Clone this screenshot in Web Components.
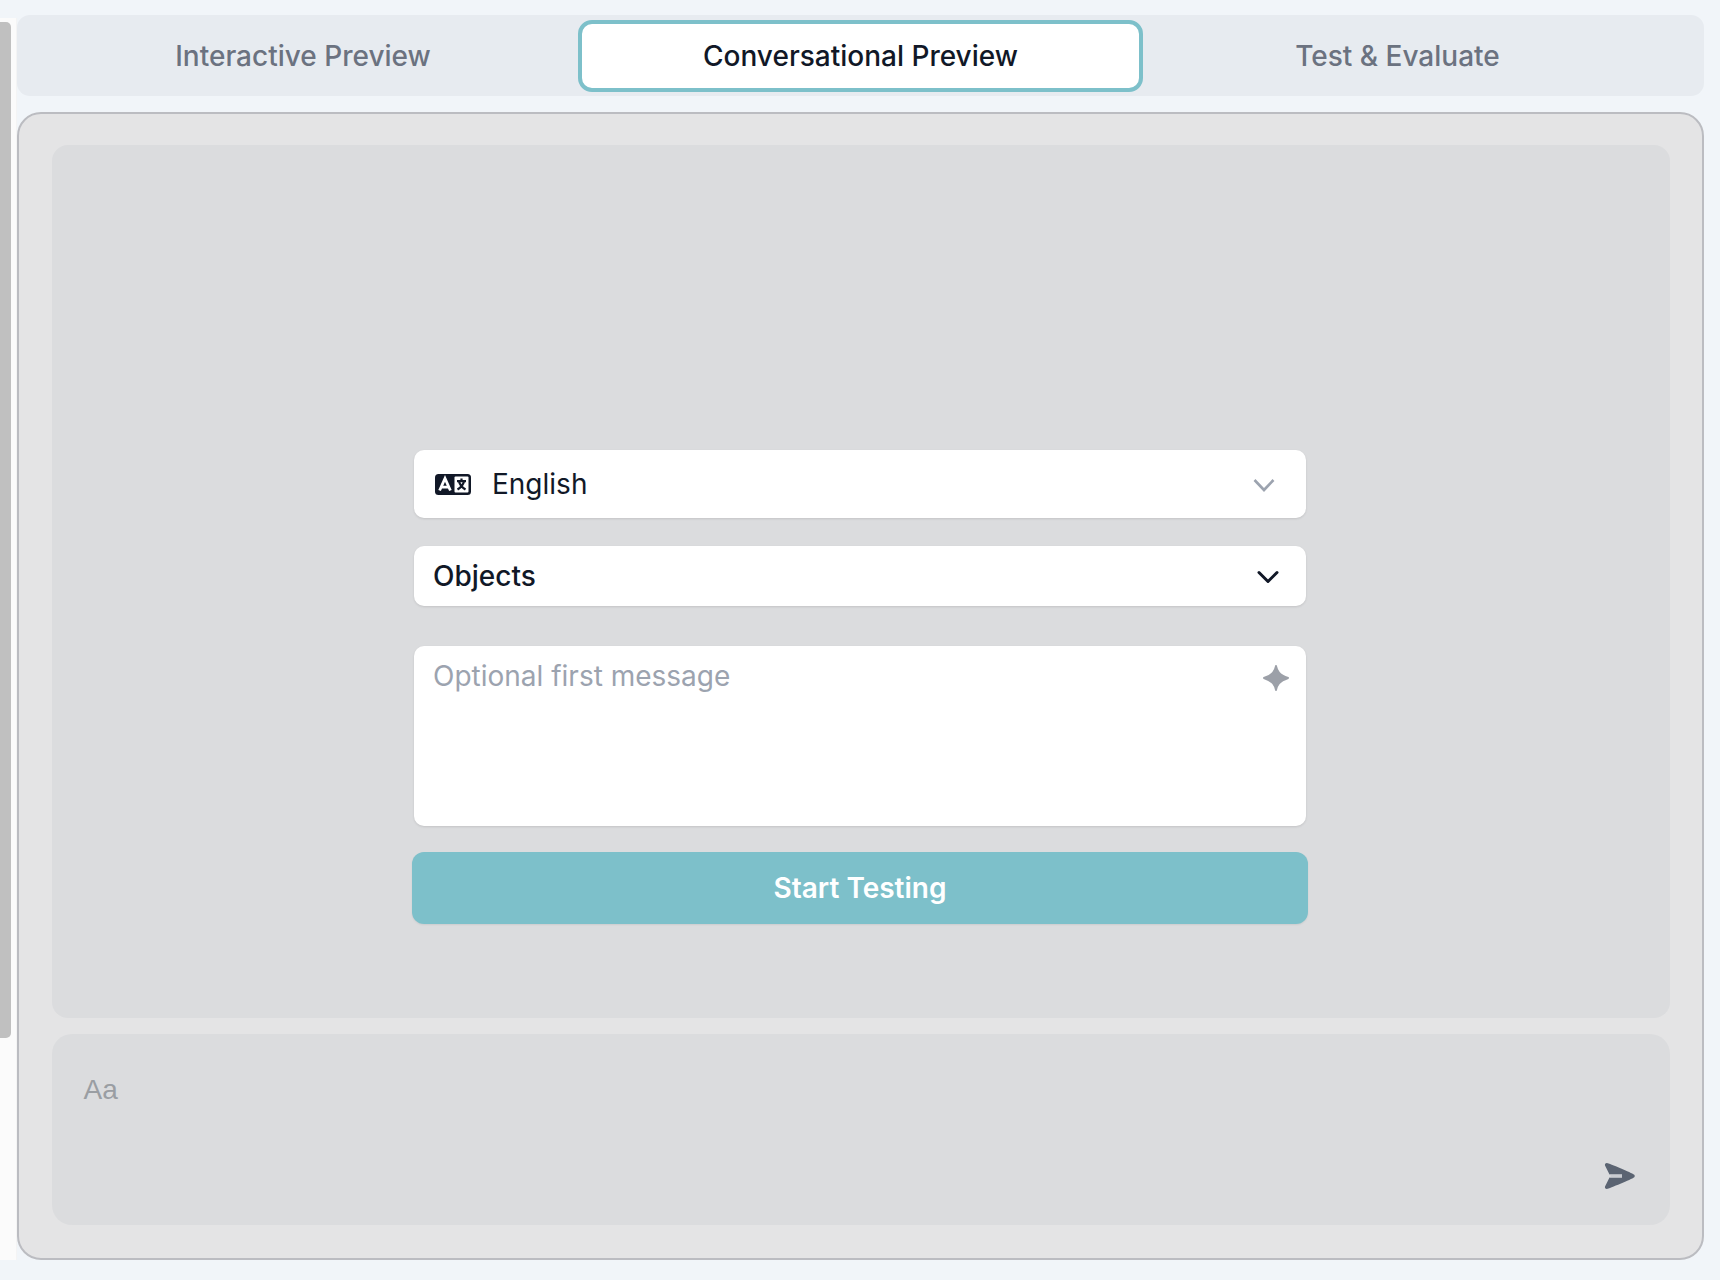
<!DOCTYPE html>
<html><head><meta charset="utf-8">
<style>
html,body{margin:0;padding:0;background:#f1f5f9;height:1280px;overflow:hidden}
body{font-family:Inter,"Liberation Sans",sans-serif}
</style></head><body>
<preview-app>
  <preview-tabs slot="tabs">
    <tab-button first>Interactive Preview</tab-button>
    <tab-button active>Conversational Preview</tab-button>
    <tab-button last>Test &amp; Evaluate</tab-button>
  </preview-tabs>
  <preview-panel slot="panel">
    <setup-form slot="stage">
      <language-select>English</language-select>
      <object-select>Objects</object-select>
      <message-box placeholder="Optional first message"></message-box>
      <start-button>Start Testing</start-button>
    </setup-form>
    <chat-input slot="input" placeholder="Aa"></chat-input>
  </preview-panel>
</preview-app>
<script>
function def(name,html,init){
  customElements.define(name,class extends HTMLElement{
    constructor(){super();this.attachShadow({mode:'open'}).innerHTML=html;}
    connectedCallback(){if(init)init.call(this)}
  });
}
def('preview-app',`<style>
:host{display:grid;grid-template-columns:17px 1fr;height:1280px;box-sizing:border-box;padding:0 16px 20px 0}
.rail{margin-top:18px;background:#fbfbfb;padding-top:4px;box-sizing:border-box;border-right:1px solid #f4f4f4}
.thumb{width:11px;height:1016px;background:#c0c0c0;border-radius:0 5px 5px 0}
.main{display:flex;flex-direction:column;gap:16px;padding-top:15px;min-width:0}
</style><div class="rail"><div class="thumb"></div></div>
<div class="main"><slot name="tabs"></slot><slot name="panel"></slot></div>`);
def('preview-tabs',`<style>
:host{display:grid;grid-template-columns:1fr 565px 1fr;align-items:center;height:81px;box-sizing:border-box;padding:4px;background:#e7ebf0;border-radius:13px;flex:none}
</style><slot></slot>`);
def('tab-button',`<style>
:host{display:flex;align-items:center;justify-content:center;height:72px;margin-top:1px;box-sizing:border-box;font-size:28px;font-weight:500;color:#6b7280;border:4px solid transparent;border-radius:14px}
:host([first]){padding-left:7px}
:host([last]){padding-right:48px}
:host([active]){background:#fff;color:#111827;border-color:#7dc0ca}
</style><slot></slot>`);
def('preview-panel',`<style>
:host{flex:1;display:flex;flex-direction:column;gap:16px;box-sizing:border-box;min-height:0;background:#e4e4e5;border:2px solid #bbbcc1;border-radius:24px;padding:31px 32px 33px 32.5px}
.stage{flex:1;background:#dbdcde;border-radius:16px;display:flex;flex-direction:column;align-items:center;justify-content:flex-end;padding-bottom:94px;box-sizing:border-box;min-height:0}
.input{flex:none;height:191px}
</style><div class="stage"><slot name="stage"></slot></div><div class="input"><slot name="input"></slot></div>`);
def('setup-form',`<style>
:host{display:flex;flex-direction:column;width:896px;margin-right:1.5px}
</style><slot></slot>`);
const field=`box-sizing:border-box;background:#fff;border-radius:10px;box-shadow:0 1px 3px rgba(0,0,0,.07),0 1px 2px rgba(0,0,0,.04);margin:0 2px;color:#111827;`;
def('language-select',`<style>
:host{${field}display:flex;align-items:center;height:68px;padding:0 30px 0 21px;font-size:28px}
.t{flex:1;margin-left:21px}
.c{margin-top:2px}
</style><svg width="36" height="21" viewBox="0 0 36 21"><rect width="36" height="21" rx="3.500" fill="#111827"/><rect x="19.500" y="2.500" width="14" height="16" rx="1" fill="#fff"/><path d="M4.600 16.500 10 4.500l5.400 12M6.800 13.200h6.400" fill="none" stroke="#fff" stroke-width="2.800"/><path d="M22 7.200h9M26.500 4.500v2.500M24 7.500c.9 3.500 3 6 6.500 8M29 7.500c-.9 3.500-3 6-6.500 8" fill="none" stroke="#111827" stroke-width="2.200"/></svg><span class="t"><slot></slot></span>
<svg class="c" width="24" height="16" viewBox="0 0 24 16"><path d="M2.500 3 12 13 21.500 3" fill="none" stroke="#9ca3af" stroke-width="2.600"/></svg>`);
def('object-select',`<style>
:host{${field}display:flex;align-items:center;justify-content:space-between;height:60px;margin-top:28px;padding:0 26px 0 19px;font-size:28px;font-weight:500}
svg{margin-top:1px}
</style><span><slot></slot></span><svg width="24" height="16" viewBox="0 0 24 16"><path d="M3 3.500 12 12.500 21 3.500" fill="none" stroke="#111827" stroke-width="3" stroke-linecap="round" stroke-linejoin="round"/></svg>`);
def('message-box',`<style>
:host{${field}display:flex;justify-content:space-between;align-items:flex-start;height:180px;margin-top:40px;padding:13px 17px 0 19px;font-size:28px;color:#9ca3af}
svg{margin-top:6px}
</style><span class="p"></span><svg width="26" height="26" viewBox="0 0 28 28"><path d="M14 1C15.200 6.500 17 10.500 27 14 17 17.500 15.200 21.500 14 27 12.800 21.500 11 17.500 1 14 11 10.500 12.800 6.500 14 1Z" fill="#9ca0a8" stroke="#9ca0a8" stroke-width="2" stroke-linejoin="round"/></svg>`,function(){this.shadowRoot.querySelector('.p').textContent=this.getAttribute('placeholder')});
def('start-button',`<style>
:host{display:flex;align-items:center;justify-content:center;height:72px;margin-top:26px;background:#7dc0ca;border-radius:12px;color:#fff;font-size:28px;font-weight:600;box-shadow:0 1px 2px rgba(0,0,0,.07)}
</style><slot></slot>`);
def('chat-input',`<style>
:host{display:block;position:relative;height:100%;box-sizing:border-box;background:#dbdcde;border-radius:20px;padding:40px 32px;font-family:"Liberation Sans",sans-serif;font-size:28px;color:#9a9ea3}
svg{position:absolute;right:35px;bottom:35px}
</style><span class="p"></span><svg width="31" height="28" viewBox="0 0 31 28"><path d="M3 1C1.500 .9.600 2.200 1 3.500L5.500 12.600H18V15.400H5.500L1 24.500C.6 25.800 1.500 27.100 3 27 5 26.700 28 17 30 15.500 31 14.700 31 13.300 30 12.500 28 11 5 1.300 3 1Z" fill="#5b6472"/><path d="M5.500 12.600H18V15.400H5.500L7 14Z" fill="#c9ccd1"/></svg>`,function(){this.shadowRoot.querySelector('.p').textContent=this.getAttribute('placeholder')});
</script>
</body></html>
